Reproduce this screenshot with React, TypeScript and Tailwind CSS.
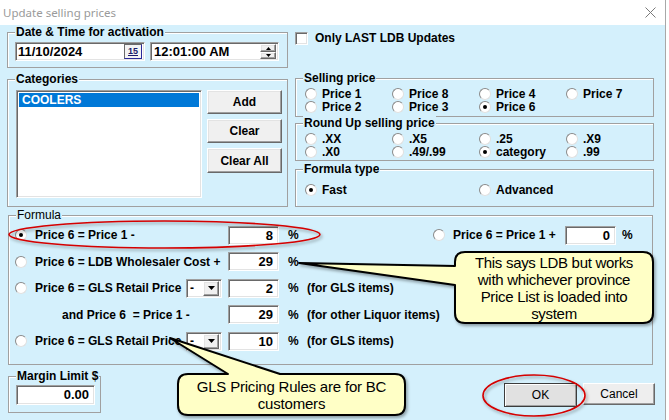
import React from 'react'

const FONT = "font-['Liberation_Sans',Arial,sans-serif]"
const sunken =
  'bg-white border border-t-[#a0a0a0] border-l-[#a0a0a0] border-b-white border-r-white shadow-[inset_1px_1px_0_#696969,inset_-1px_-1px_0_#e3e3e3]'
const raised =
  'bg-[#f0f0f0] border border-t-white border-l-white border-b-[#696969] border-r-[#696969] shadow-[inset_-1px_-1px_0_#a0a0a0,inset_1px_1px_0_#e3e3e3]'

function Group({
  title,
  className,
  bold = true,
  children,
}: {
  title: string
  className?: string
  bold?: boolean
  children?: React.ReactNode
}) {
  return (
    <fieldset className={`border border-[#a0a0a0] shadow-[inset_1px_1px_0_#fff] ${className ?? ''}`}>
      <legend className={`ml-[7px] px-[1px] text-[12px] leading-[14px] bg-[#d4f0fc] ${bold ? 'font-bold' : ''}`}>
        {title}
      </legend>
      {children}
    </fieldset>
  )
}

function Radio({ label, checked, gap = 'ml-[5px]' }: { label: string; checked?: boolean; gap?: string }) {
  return (
    <div className="flex items-center h-[13px] whitespace-pre">
      <span className="w-[12px] h-[12px] shrink-0 rounded-full bg-white border border-t-[#8a8a8a] border-l-[#8a8a8a] border-r-[#e0e0e0] border-b-[#e0e0e0] flex items-center justify-center">
        {checked && <span className="w-[4px] h-[4px] rounded-full bg-black" />}
      </span>
      <span className={gap}>{label}</span>
    </div>
  )
}

function NumBox({ value, width = 'w-[51px]' }: { value: string; width?: string }) {
  return (
    <div className={`${sunken} ${width} h-[19px] flex items-center justify-end pr-[5px] text-[13px] font-bold`}>
      {value}
    </div>
  )
}

function Combo() {
  return (
    <div className={`${sunken} w-[36px] h-[19px] flex items-center justify-between pl-[3px] pr-[2px]`}>
      <span className="text-[12px] font-bold leading-none">-</span>
      <span className={`${raised} w-[16px] h-[15px] flex items-center justify-center`}>
        <svg width="7" height="4" viewBox="0 0 7 4">
          <path d="M0 0H7L3.5 4Z" fill="#000" />
        </svg>
      </span>
    </div>
  )
}

function Button({ label, className }: { label: string; className?: string }) {
  return (
    <div className={`${raised} flex items-center justify-center text-[12px] font-bold ${className ?? ''}`}>{label}</div>
  )
}

export default function App() {
  return (
    <div className={`relative w-[669px] h-[420px] bg-white overflow-hidden text-black ${FONT}`}>
      <div className="w-[666px] h-[420px] flex flex-col border-r border-[#a8a8a8]">
        {/* title bar */}
        <div className="h-[25px] shrink-0 flex items-center justify-between pl-[3px] pr-[9px] bg-white">
          <span className="font-['Noto_Sans',sans-serif] text-[11.5px] text-[#9a9a9a]">Update selling prices</span>
          <svg width="11" height="11" viewBox="0 0 11 11">
            <path d="M0.5 0.5L10.5 10.5M10.5 0.5L0.5 10.5" stroke="#7a7a7a" strokeWidth="1" />
          </svg>
        </div>

        <div className="flex-1 bg-[#d4f0fc] pl-[7px] flex flex-col">
          {/* date row */}
          <div className="flex h-[45px] items-start">
            <Group title="Date & Time for activation" className="w-[281px] h-[43px]">
              <div className="flex pl-[7px] pt-[3px] gap-[5px] text-[13px] font-bold">
                <div className={`${sunken} w-[130px] h-[19px] flex items-center justify-between pl-[2px] pr-[2px]`}>
                  <span>11/10/2024</span>
                  <span className="w-[18px] h-[15px] border border-[#6a6a6a] border-r-[#2a2a9a] border-b-[#2a2a9a] bg-[#f4f4f4] flex items-center justify-center">
                    <span className="text-[9px] leading-none font-bold text-[#1a1a6a] underline">15</span>
                  </span>
                </div>
                <div className={`${sunken} w-[129px] h-[19px] flex items-center justify-between pl-[3px] pr-[2px]`}>
                  <span>12:01:00 AM</span>
                  <span className="flex flex-col w-[16px] h-[15px]">
                    <span className={`${raised} h-[8px] flex items-center justify-center`}>
                      <svg width="5" height="3" viewBox="0 0 5 3">
                        <path d="M0 3H5L2.5 0Z" fill="#000" />
                      </svg>
                    </span>
                    <span className={`${raised} h-[7px] flex items-center justify-center`}>
                      <svg width="5" height="3" viewBox="0 0 5 3">
                        <path d="M0 0H5L2.5 3Z" fill="#000" />
                      </svg>
                    </span>
                  </span>
                </div>
              </div>
            </Group>
            <div className="ml-[7px] mt-[6px] h-[14px] flex items-center text-[12px] leading-[14px] font-bold">
              <span className={`${sunken} w-[13px] h-[13px]`} />
              <span className="ml-[7px]">Only LAST LDB Updates</span>
            </div>
          </div>

          {/* categories + price options */}
          <div className="flex items-start">
            <Group title="Categories" className="mt-[2px] w-[281px] h-[135px]">
              <div className="flex pl-[8px] pt-[4px] gap-[5px]">
                <div className={`${sunken} w-[186px] h-[108px] p-[2px]`}>
                  <div className="h-[14px] bg-[#0078d7] text-white text-[12px] font-bold leading-[14px] pl-[3px]">
                    COOLERS
                  </div>
                </div>
                <div className="flex flex-col gap-[5px]">
                  <Button label="Add" className="w-[75px] h-[24px]" />
                  <Button label="Clear" className="w-[75px] h-[24px]" />
                  <Button label="Clear All" className="w-[75px] h-[25px]" />
                </div>
              </div>
            </Group>

            <div className="ml-[7px] mt-[1px] w-[359px] flex flex-col text-[12px] font-bold">
              <Group title="Selling price" className="h-[46px]">
                <div className="grid grid-cols-[87px_87px_87px_87px] pl-[9px] pt-[2px]">
                  <Radio label="Price 1" />
                  <Radio label="Price 8" />
                  <Radio label="Price 4" />
                  <Radio label="Price 7" />
                  <Radio label="Price 2" />
                  <Radio label="Price 3" />
                  <Radio label="Price 6" checked />
                </div>
              </Group>
              <Group title="Round Up selling price" className="-mt-px h-[45px]">
                <div className="grid grid-cols-[87px_87px_87px_87px] pl-[9px] pt-[2px]">
                  <Radio label=".XX" />
                  <Radio label=".X5" />
                  <Radio label=".25" />
                  <Radio label=".X9" />
                  <Radio label=".X0" />
                  <Radio label=".49/.99" />
                  <Radio label="category" checked />
                  <Radio label=".99" />
                </div>
              </Group>
              <Group title="Formula type" className="mt-[1px] h-[45px]">
                <div className="grid grid-cols-[174px_174px] pl-[9px] pt-[7px]">
                  <Radio label="Fast" checked />
                  <Radio label="Advanced" />
                </div>
              </Group>
            </div>
          </div>

          {/* formula */}
          <Group title="Formula" bold={false} className="mt-[1px] ml-px w-[645px] h-[157px]">
            <div className="flex flex-col pl-[6px] text-[12px] font-bold">
              <div className="h-[26.5px] flex items-center">
                <div className="w-[213px]">
                  <Radio label="Price 6 = Price 1 -" checked gap="ml-[8px]" />
                </div>
                <NumBox value="8" />
                <span className="w-[27px] pl-[9px]">%</span>
                <div className="ml-[127px] w-[132px]">
                  <Radio label="Price 6 = Price 1 +" gap="ml-[8px]" />
                </div>
                <NumBox value="0" />
                <span className="pl-[6px]">%</span>
              </div>
              <div className="h-[26.5px] flex items-center">
                <div className="w-[213px]">
                  <Radio label="Price 6 = LDB Wholesaler Cost +" gap="ml-[8px]" />
                </div>
                <NumBox value="29" />
                <span className="w-[27px] pl-[9px]">%</span>
              </div>
              <div className="h-[26.5px] flex items-center">
                <div className="w-[171px]">
                  <Radio label="Price 6 = GLS Retail Price" gap="ml-[8px]" />
                </div>
                <Combo />
                <span className="w-[6px]" />
                <NumBox value="2" />
                <span className="w-[28px] pl-[9px]">%</span>
                <span>(for GLS items)</span>
              </div>
              <div className="h-[26.5px] flex items-center">
                <span className="w-[213px] pl-[47px] whitespace-pre">and Price 6  = Price 1 -</span>
                <NumBox value="29" />
                <span className="w-[28px] pl-[9px]">%</span>
                <span>(for other Liquor items)</span>
              </div>
              <div className="h-[26.5px] flex items-center">
                <div className="w-[171px]">
                  <Radio label="Price 6 = GLS Retail Price" gap="ml-[8px]" />
                </div>
                <Combo />
                <span className="w-[6px]" />
                <NumBox value="10" />
                <span className="w-[28px] pl-[9px]">%</span>
                <span>(for GLS items)</span>
              </div>
            </div>
          </Group>

          {/* bottom row */}
          <div className="flex items-start mt-[4px] ml-px">
            <Group title="Margin Limit $" className="w-[93px] h-[44px]">
              <div className="pl-[7px] pt-[2px]">
                <NumBox value="0.00" width="w-[79px] h-[20px]" />
              </div>
            </Group>
            <div className="ml-[403px] mt-[14px] flex items-start gap-[6px] text-[12px]">
              <div className="w-[73px] h-[24px] bg-[#e1e1e1] border border-[#3c3c3c] shadow-[inset_1px_1px_0_#fff,inset_-1px_-1px_0_#a0a0a0] flex items-center justify-center">
                OK
              </div>
              <div className="w-[72px] h-[22px] bg-[#eeeeee] border border-t-white border-l-white border-b-[#696969] border-r-[#696969] shadow-[inset_-1px_-1px_0_#a0a0a0] flex items-center justify-center">
                Cancel
              </div>
            </div>
          </div>
        </div>
      </div>

      {/* annotations drawn over the dialog */}
      <svg
        className="absolute left-0 top-0 pointer-events-none"
        width="669"
        height="420"
        viewBox="0 0 669 420"
      >
        <defs>
          <filter id="sh" x="-10%" y="-20%" width="130%" height="160%">
            <feDropShadow dx="1.5" dy="2" stdDeviation="1.5" floodColor="#000" floodOpacity="0.35" />
          </filter>
        </defs>
        <ellipse cx="164.5" cy="234.5" rx="155.5" ry="13.5" fill="none" stroke="#d40000" strokeWidth="1.6" filter="url(#sh)" />
        <ellipse cx="534" cy="395.5" rx="51" ry="20.5" fill="none" stroke="#d40000" strokeWidth="1.6" filter="url(#sh)" />
        <path
          d="M465 252H643Q653 252 653 262V313Q653 323 643 323H465Q455 323 455 313V285L299 263L455 266V262Q455 252 465 252Z"
          fill="#ffffc6"
          stroke="#000"
          strokeWidth="2"
          strokeLinejoin="round"
          filter="url(#sh)"
        />
        <path
          d="M188 374H228L170 338L280 374H395Q405 374 405 384V405Q405 415 395 415H188Q178 415 178 405V384Q178 374 188 374Z"
          fill="#ffffc6"
          stroke="#000"
          strokeWidth="2"
          strokeLinejoin="round"
          filter="url(#sh)"
        />
      </svg>
      <div className="absolute left-[455px] top-[252px] w-[198px] h-[71px] flex flex-col items-center justify-center text-[15px] leading-[17px] tracking-[-0.3px]">
        <span>This says LDB but works</span>
        <span>with whichever province</span>
        <span>Price List is loaded into</span>
        <span>system</span>
      </div>
      <div className="absolute left-[178px] top-[374px] w-[227px] h-[41px] flex flex-col items-center justify-center text-[15px] leading-[17px] tracking-[-0.2px]">
        <span>GLS Pricing Rules are for BC</span>
        <span>customers</span>
      </div>
    </div>
  )
}
